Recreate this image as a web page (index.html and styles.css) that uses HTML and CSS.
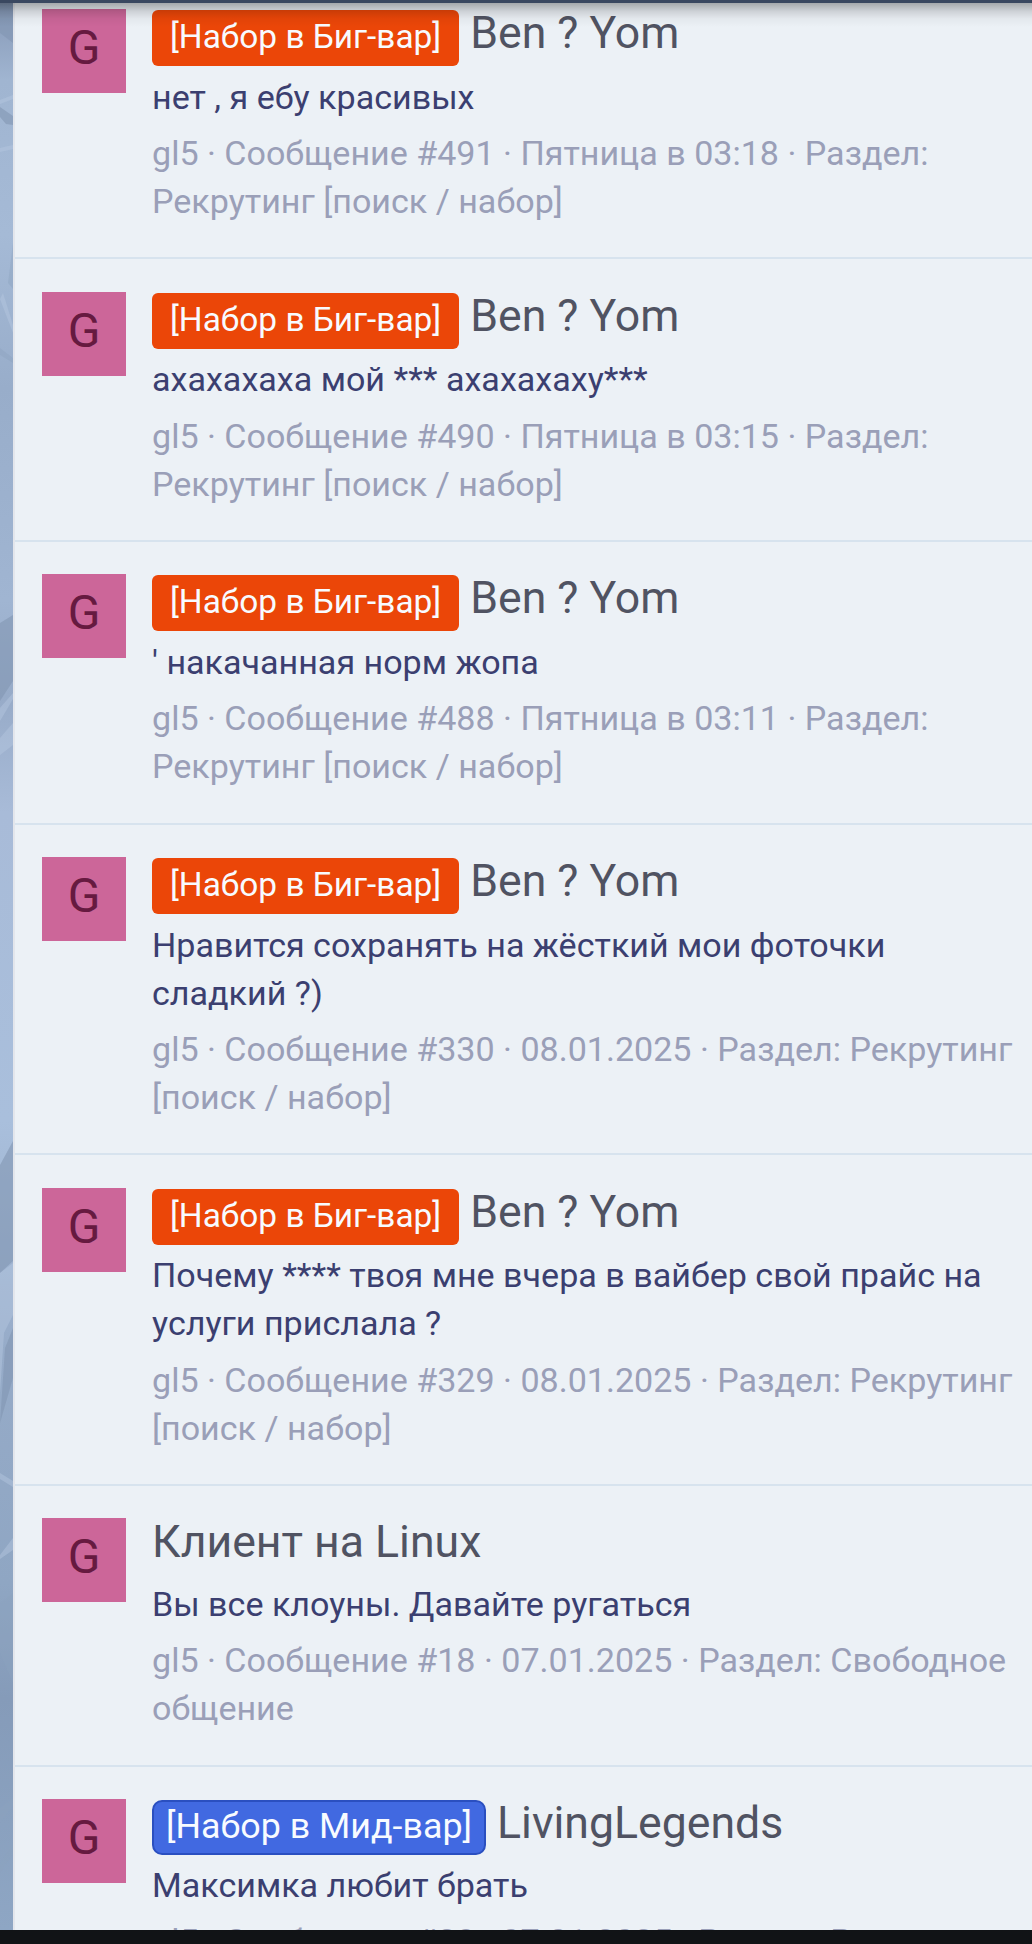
FILE: index.html
```html
<!DOCTYPE html>
<html lang="ru">
<head>
    <meta charset="UTF-8">
    <meta name="viewport" content="width=device-width, initial-scale=1.0">
    <title>Результаты поиска</title>
    <link rel="stylesheet" href="styles.css">
</head>
<body>
    <div class="top-bar"></div>
    <div class="page">
        <svg class="backdrop" viewBox="0 0 13 1927" preserveAspectRatio="none">
            <defs>
                <linearGradient id="ice" x1="0" y1="0" x2="0" y2="1">
                    <stop offset="0" stop-color="#8597b5"/>
                    <stop offset="0.04" stop-color="#a0b5d1"/>
                    <stop offset="0.12" stop-color="#a5bad6"/>
                    <stop offset="0.2" stop-color="#98adca"/>
                    <stop offset="0.31" stop-color="#a0b5d2"/>
                    <stop offset="0.36" stop-color="#97abc8"/>
                    <stop offset="0.42" stop-color="#a8bbd8"/>
                    <stop offset="0.58" stop-color="#a9bfdc"/>
                    <stop offset="0.7" stop-color="#96abc8"/>
                    <stop offset="0.82" stop-color="#8fa6c3"/>
                    <stop offset="0.88" stop-color="#859bb9"/>
                    <stop offset="1" stop-color="#8ea6c4"/>
                </linearGradient>
            </defs>
            <rect width="13" height="1927" fill="url(#ice)"/>
            <path fill="#8296b3" opacity="0.6" d="M0 0H13V40L0 30ZM0 104L13 113V122L6 121L0 114ZM0 620L13 612V678L0 698ZM0 1162L13 1138V1258L0 1270ZM5 1345L13 1325V1375L0 1420Z"/>
            <path fill="#b6c8df" opacity="0.45" d="M0 97L13 92V96L0 101ZM0 145L13 142V146L0 149ZM3 290L13 322V330L0 296ZM0 705L13 690V696L0 718ZM0 735L13 720V742L0 752ZM0 1270L13 1260V1312L4 1330L0 1390ZM0 1470L13 1478V1484L0 1476ZM0 1552L13 1535V1547L0 1556Z"/>
            <path fill="#8da2bf" opacity="0.4" d="M13 240L8 280L13 286ZM0 345L13 355V360L0 352ZM0 1600L13 1590V1680L0 1650ZM0 1805L13 1795V1803L0 1820ZM0 1860L13 1840V1850L0 1870Z"/>
        </svg>
        <main class="panel">
            <ol class="results">
                <li class="row">
                    <div class="avatar">G</div>
                    <div class="content">
                        <h3 class="title"><span class="label label-orange">[Набор в Биг-вар]</span> Ben ? Yom</h3>
                        <div class="snippet">нет , я ебу красивых</div>
                        <div class="meta">gl5 · Сообщение #491 · Пятница в 03:18 · Раздел: Рекрутинг [поиск / набор]</div>
                    </div>
                </li>
                <li class="row">
                    <div class="avatar">G</div>
                    <div class="content">
                        <h3 class="title"><span class="label label-orange">[Набор в Биг-вар]</span> Ben ? Yom</h3>
                        <div class="snippet">ахахахаха мой *** ахахахаху***</div>
                        <div class="meta">gl5 · Сообщение #490 · Пятница в 03:15 · Раздел: Рекрутинг [поиск / набор]</div>
                    </div>
                </li>
                <li class="row">
                    <div class="avatar">G</div>
                    <div class="content">
                        <h3 class="title"><span class="label label-orange">[Набор в Биг-вар]</span> Ben ? Yom</h3>
                        <div class="snippet">' накачанная норм жопа</div>
                        <div class="meta">gl5 · Сообщение #488 · Пятница в 03:11 · Раздел: Рекрутинг [поиск / набор]</div>
                    </div>
                </li>
                <li class="row">
                    <div class="avatar">G</div>
                    <div class="content">
                        <h3 class="title"><span class="label label-orange">[Набор в Биг-вар]</span> Ben ? Yom</h3>
                        <div class="snippet">Нравится сохранять на жёсткий мои фоточки сладкий ?)</div>
                        <div class="meta">gl5 · Сообщение #330 · 08.01.2025 · Раздел: Рекрутинг [поиск / набор]</div>
                    </div>
                </li>
                <li class="row">
                    <div class="avatar">G</div>
                    <div class="content">
                        <h3 class="title"><span class="label label-orange">[Набор в Биг-вар]</span> Ben ? Yom</h3>
                        <div class="snippet">Почему **** твоя мне вчера в вайбер свой прайс на услуги прислала ?</div>
                        <div class="meta">gl5 · Сообщение #329 · 08.01.2025 · Раздел: Рекрутинг [поиск / набор]</div>
                    </div>
                </li>
                <li class="row">
                    <div class="avatar">G</div>
                    <div class="content">
                        <h3 class="title title-short">Клиент на Linux</h3>
                        <div class="snippet">Вы все клоуны. Давайте ругаться</div>
                        <div class="meta">gl5 · Сообщение #18 · 07.01.2025 · Раздел: Свободное общение</div>
                    </div>
                </li>
                <li class="row">
                    <div class="avatar">G</div>
                    <div class="content">
                        <h3 class="title title-short"><span class="label label-blue">[Набор в Мид-вар]</span> LivingLegends</h3>
                        <div class="snippet">Максимка любит брать</div>
                        <div class="meta">gl5 · Сообщение #28 · 07.01.2025 · Раздел: Рекрутинг [поиск / набор]</div>
                    </div>
                </li>
            </ol>
        </main>
    </div>
    <div class="bottom-bar"></div>
</body>
</html>
```

FILE: styles.css
```css
:root {
    --panel: #ecf1f6;
    --line: #d7e3ee;
    --title: #505362;
    --snippet: #3b3f70;
    --muted: #9a9fb8;
}

* {
    box-sizing: border-box;
}

body {
    margin: 0;
    height: 1944px;
    display: flex;
    flex-direction: column;
    overflow: hidden;
    font-family: Roboto, sans-serif;
    font-size: 34.07px;
    line-height: 48px;
    background-color: var(--panel);
}

.top-bar {
    flex: none;
    height: 3px;
    background-color: #3a4860;
    position: relative;
    z-index: 1;
}

/* shadow the bar casts on the list */
.top-bar::after {
    content: "";
    position: absolute;
    top: 100%;
    left: 0;
    right: 0;
    height: 24px;
    background: linear-gradient(rgba(0,0,0,0.3), rgba(0,0,0,0.13) 35%, rgba(0,0,0,0.04) 65%, rgba(0,0,0,0));
}

.page {
    flex: 1;
    min-height: 0;
    display: flex;
    overflow: hidden;
}

.backdrop {
    flex: none;
    width: 13px;
    height: 1927px;
}

.panel {
    flex: 1;
    min-width: 0;
    border-left: 2px solid #e3e6ec;
    background-color: var(--panel);
}

.results {
    list-style: none;
    margin: -26.3px 0 0;
    padding: 0;
}

.row {
    display: flex;
    gap: 26px;
    padding: 32.3px 12px 32.3px 27px;
    border-bottom: 2px solid var(--line);
}

.avatar {
    flex: none;
    width: 84px;
    height: 84px;
    background-color: #cc6699;
    color: #661a40;
    font-size: 48px;
    line-height: 78px;
    text-align: center;
}

.content {
    flex: 1;
    min-width: 0;
}

.title {
    margin: 0;
    height: 63.7px;
    font-size: 44.6px;
    font-weight: 400;
    line-height: 48px;
    color: var(--title);
    white-space: nowrap;
}

.title-short {
    height: 61.7px;
}

.label {
    display: inline-block;
    height: 56px;
    padding: 0 18px;
    border-radius: 6px;
    font-size: 33.4px;
    line-height: 53px;
    color: #f8fbff;
}

.label-orange {
    background-color: #eb4608;
}

.label-blue {
    height: 55px;
    padding: 0 12px;
    border: 2px solid #2a4fc0;
    border-radius: 10px;
    font-size: 35.8px;
    line-height: 49px;
    background-color: #4169e1;
}

.snippet {
    color: var(--snippet);
}

.meta {
    margin-top: 8.4px;
    color: var(--muted);
}

.bottom-bar {
    flex: none;
    height: 14px;
    background-color: #111316;
}
```
